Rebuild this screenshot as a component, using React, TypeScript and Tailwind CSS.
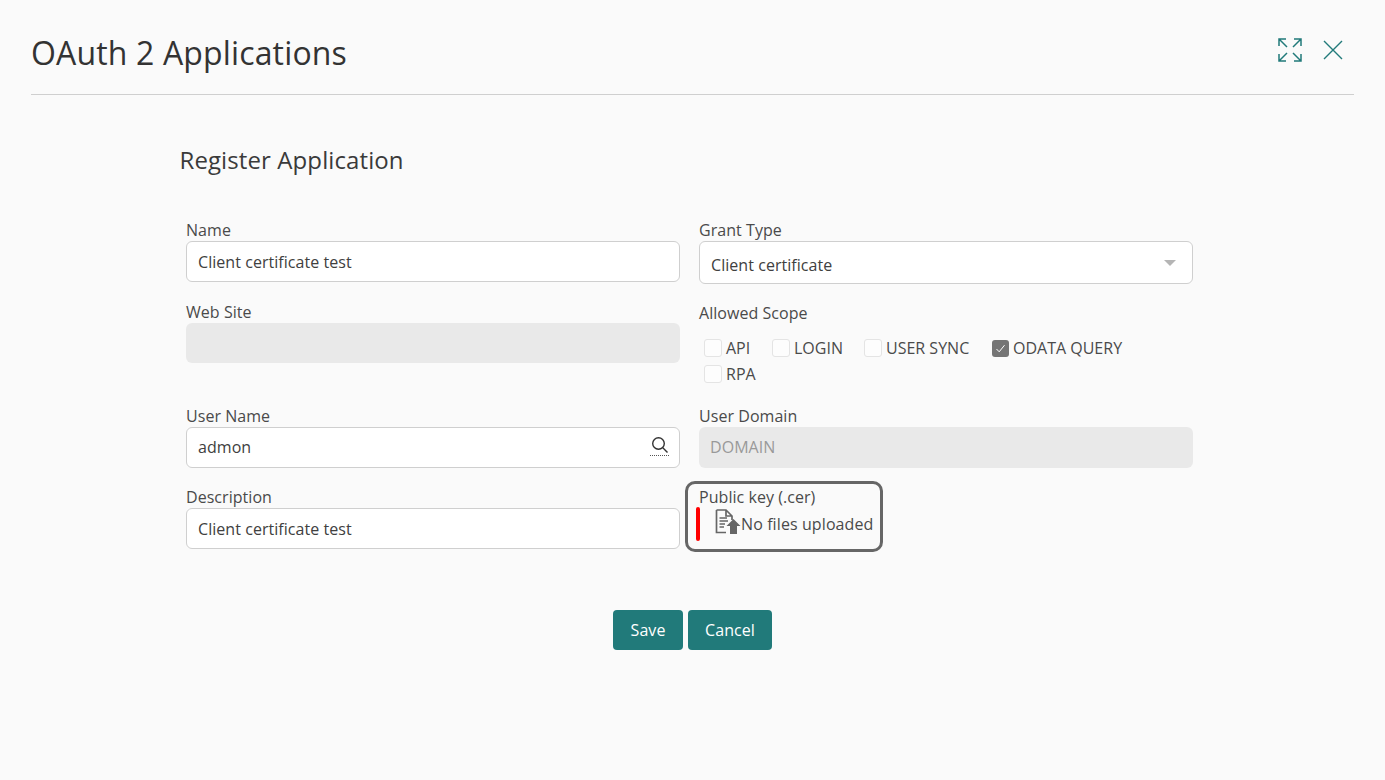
const inputCls = 'w-full h-[41px] px-[11px] bg-white border border-[#cfcfcf] rounded-[6px] text-[16px] text-[#404040] flex items-center'
const disabledCls = 'w-full px-[11px] bg-[#e9e9e9] rounded-[6px] text-[16px] text-[#999] flex items-center'

function Check({ label, checked, w }: { label: string; checked?: boolean; w: string }) {
  return (
    <div className={`flex items-center gap-[4px] h-[26px] ${w}`}>
      {checked ? (
        <span className="w-[17px] h-[17px] ml-[1px] rounded-[3px] bg-[#757575] flex items-center justify-center shrink-0">
          <svg width="11" height="11" viewBox="0 0 11 11" fill="none" stroke="#fff" strokeWidth="1">
            <path d="M1.5 6 L4.2 8.8 L9.5 2.2" />
          </svg>
        </span>
      ) : (
        <span className="w-[18px] h-[18px] rounded-[3px] bg-[#fdfdfd] border border-[#e4e4e4] shrink-0" />
      )}
      <span className="text-[16px] tracking-normal text-[#4a4a4a] whitespace-nowrap">{label}</span>
    </div>
  )
}

export default function App() {
  return (
    <div className="w-[1385px] h-[780px] overflow-hidden bg-[#fafafa] font-['Open_Sans','Noto_Sans',sans-serif] tracking-[0.05px] text-[#333]">
      {/* header */}
      <div className="mx-[31px] h-[95px] border-b border-[#cfcfcf] flex items-start justify-between">
        <h1 className="mt-[31px] text-[32px] leading-[44px] tracking-[0.15px] text-[#333]">OAuth 2 Applications</h1>
        <div className="flex items-center gap-[21px] mt-[38px] mr-[11px] h-[24px]">
          <svg width="24" height="24" viewBox="0 0 24 24" fill="none" stroke="#217a7a" strokeWidth="1.5">
            <path d="M1 8 V1 H8 M1 1 L9 9" />
            <path d="M23 8 V1 H16 M23 1 L15 9" />
            <path d="M1 16 V23 H8 M1 23 L9 15" />
            <path d="M23 16 V23 H16 M23 23 L15 15" />
          </svg>
          <svg width="20" height="20" viewBox="0 0 20 20" fill="none" stroke="#217a7a" strokeWidth="1.4">
            <path d="M1 1 L19 19 M19 1 L1 19" />
          </svg>
        </div>
      </div>

      <div className="pl-[180px] pt-[46px]">
        <h2 className="text-[24px] leading-[38px] tracking-[0.1px] -ml-[0.5px] text-[#3a3a3a]">Register Application</h2>

        {/* form */}
        <div className="ml-[6px] mt-[41px] w-[1007px] grid grid-cols-[494px_494px] gap-x-[19px]">
          <div className="h-[82px]">
            <label className="block text-[16px] leading-[21px] text-[#4a4a4a]">Name</label>
            <div className={inputCls}>Client certificate test</div>
          </div>
          <div className="h-[82px]">
            <label className="block text-[16px] leading-[21px] text-[#4a4a4a]">Grant Type</label>
            <div className={`${inputCls} h-[43px] justify-between pr-[16px] pt-[5px]`}>
              <span>Client certificate</span>
              <span className="w-0 h-0 -mt-[5px] border-l-[6px] border-r-[6px] border-t-[6px] border-l-transparent border-r-transparent border-t-[#b5b5b5]" />
            </div>
          </div>

          <div className="h-[104px]">
            <label className="block text-[16px] leading-[21px] text-[#4a4a4a]">Web Site</label>
            <div className={`${disabledCls} h-[40px]`} />
          </div>
          <div className="h-[104px] pt-[1px]">
            <label className="block text-[16px] leading-[21px] text-[#4a4a4a]">Allowed Scope</label>
            <div className="ml-[5px] mt-[11px] flex flex-wrap w-[440px]">
              <Check label="API" w="w-[68px]" />
              <Check label="LOGIN" w="w-[92px]" />
              <Check label="USER SYNC" w="w-[127px]" />
              <Check label="ODATA QUERY" checked w="w-[140px]" />
              <Check label="RPA" w="w-[68px]" />
            </div>
          </div>

          <div className="h-[81px]">
            <label className="block text-[16px] leading-[21px] text-[#4a4a4a]">User Name</label>
            <div className={`${inputCls} justify-between pr-[10px]`}>
              <span className="-mt-[1px]">admon</span>
              <span className="flex flex-col items-center -mt-[3px]">
                <svg width="18" height="18" viewBox="0 0 18 18" fill="none" stroke="#333" strokeWidth="1.4">
                  <circle cx="7.5" cy="7.5" r="5.8" />
                  <path d="M11.8 11.8 L16.5 16.5" />
                </svg>
                <span className="w-[19px] border-t border-dotted border-[#555] mt-[1px]" />
              </span>
            </div>
          </div>
          <div className="h-[81px]">
            <label className="block text-[16px] leading-[21px] text-[#4a4a4a]">User Domain</label>
            <div className={`${disabledCls} h-[41px] pb-[2px]`}>DOMAIN</div>
          </div>

          <div>
            <label className="block text-[16px] leading-[21px] text-[#4a4a4a]">Description</label>
            <div className={inputCls}>Client certificate test</div>
          </div>
          <div className="relative">
            <div className="-ml-[14px] -mt-[6px] w-[198px] h-[71px] border-[3px] border-[#666] rounded-[10px] pl-[11px] pt-[3px] flex flex-col">
              <label className="block text-[16px] leading-[21px] text-[#4a4a4a]">Public key (.cer)</label>
              <div className="flex items-center h-[33px] -mt-[1px]">
                <span className="w-[4px] h-[34px] bg-[#f00] rounded-[2px] -ml-[3px] mr-[15px] shrink-0" />
                <svg width="26" height="26" viewBox="0 0 26 26" fill="none" className="shrink-0 -mt-[3px]">
                  <path d="M1.5 1 H11 L17 7 V11 M11 1 V7 H17 M1.5 1 V23.5 H11" stroke="#666" strokeWidth="1.7" />
                  <path d="M4.5 9 H12 M4.5 12 H13 M4.5 15 H10 M4.5 18 H9" stroke="#666" strokeWidth="1.3" />
                  <path d="M18.5 10 L25.5 17 H22 V25 H15 V17 H11.5 Z" fill="#666" />
                </svg>
                <span className="text-[16px] tracking-[0.1px] text-[#4a4a4a] whitespace-nowrap">No files uploaded</span>
              </div>
            </div>
          </div>
        </div>

        {/* buttons */}
        <div className="ml-[433px] mt-[58px] flex gap-[5px]">
          <button className="w-[70px] h-[40px] rounded-[4px] bg-[#217a7a] text-white text-[16px] font-medium">Save</button>
          <button className="w-[84px] h-[40px] rounded-[4px] bg-[#217a7a] text-white text-[16px] font-medium">Cancel</button>
        </div>
      </div>
    </div>
  )
}
